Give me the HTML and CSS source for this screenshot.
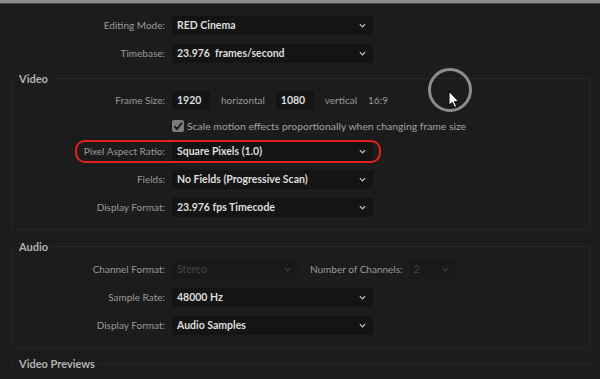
FILE: index.html
```html
<!DOCTYPE html>
<html lang="en">
<head>
  <meta charset="UTF-8">
  <title>Sequence Settings</title>
  <link rel="stylesheet" href="styles.css">
</head>
<body>
  <div class="topbar"></div>
  <div class="general">
    <div class="row">
      <div class="label">Editing Mode:</div>
      <div class="select"><span>RED Cinema</span><svg class="chev" viewBox="0 0 8 5"><path d="M1 1 L4 4 L7 1"/></svg></div>
    </div>
    <div class="row">
      <div class="label">Timebase:</div>
      <div class="select"><span>23.976&nbsp; frames/second</span><svg class="chev" viewBox="0 0 8 5"><path d="M1 1 L4 4 L7 1"/></svg></div>
    </div>
  </div>

  <fieldset class="group video">
    <legend>Video</legend>
    <div class="row first frame">
      <div class="label">Frame Size:</div>
      <div class="inline">
        <div class="num">1920</div>
        <span class="word">horizontal</span>
        <div class="num">1080</div>
        <span class="word">vertical</span>
        <span class="word">16:9</span>
      </div>
    </div>
    <div class="row scale">
      <div></div>
      <label class="check"><span class="box"><svg viewBox="0 0 10 10"><path d="M2 5.2 L4.2 7.5 L8.2 2.3"/></svg></span>Scale motion effects proportionally when changing frame size</label>
    </div>
    <div class="row par">
      <div class="label">Pixel Aspect Ratio:</div>
      <div class="select"><span>Square Pixels (1.0)</span><svg class="chev" viewBox="0 0 8 5"><path d="M1 1 L4 4 L7 1"/></svg></div>
      <div class="highlight"></div>
    </div>
    <div class="row">
      <div class="label">Fields:</div>
      <div class="select"><span>No Fields (Progressive Scan)</span><svg class="chev" viewBox="0 0 8 5"><path d="M1 1 L4 4 L7 1"/></svg></div>
    </div>
    <div class="row">
      <div class="label">Display Format:</div>
      <div class="select"><span>23.976 fps Timecode</span><svg class="chev" viewBox="0 0 8 5"><path d="M1 1 L4 4 L7 1"/></svg></div>
    </div>
  </fieldset>

  <fieldset class="group audio">
    <legend>Audio</legend>
    <div class="row first">
      <div class="label">Channel Format:</div>
      <div class="inline">
        <div class="select off wide"><span>Stereo</span><svg class="chev" viewBox="0 0 8 5"><path d="M1 1 L4 4 L7 1"/></svg></div>
        <span class="label channels">Number of Channels:</span>
        <div class="select off narrow"><span>2</span><svg class="chev" viewBox="0 0 8 5"><path d="M1 1 L4 4 L7 1"/></svg></div>
      </div>
    </div>
    <div class="row">
      <div class="label">Sample Rate:</div>
      <div class="select"><span>48000 Hz</span><svg class="chev" viewBox="0 0 8 5"><path d="M1 1 L4 4 L7 1"/></svg></div>
    </div>
    <div class="row">
      <div class="label">Display Format:</div>
      <div class="select"><span>Audio Samples</span><svg class="chev" viewBox="0 0 8 5"><path d="M1 1 L4 4 L7 1"/></svg></div>
    </div>
  </fieldset>

  <fieldset class="group previews">
    <legend>Video Previews</legend>
  </fieldset>

  <svg class="cursor" width="48" height="48" viewBox="0 0 48 48">
    <circle cx="24" cy="24" r="20.5" fill="none" stroke="#8c8c8c" stroke-width="3"/>
    <path d="M23 25 L23 39.5 L26.3 36.6 L28.7 41.6 L30.8 40.6 L28.5 35.7 L32.8 35.4 Z" fill="#fff" stroke="#111" stroke-width="1.1" stroke-linejoin="round"/>
  </svg>
</body>
</html>
```

FILE: styles.css
```css
body {
  margin: 0;
  background-color: #1c1c1c;
  color: #9a9a9a;
  font-family: Lato, "Open Sans", sans-serif;
  font-size: 10px;
  height: 379px;
  overflow: hidden;
  position: relative;
}
.topbar {
  height: 3px;
  background-color: #8e8e8e;
  border-bottom: 1px solid #4a4a4a;
}
.general {
  padding-top: 7px;
  border-bottom: 1px solid #222;
  width: 560px;
}
.row {
  display: grid;
  grid-template-columns: 165px 1fr;
  column-gap: 7px;
  align-items: center;
  height: 28px;
}
.group .row {
  grid-template-columns: 152px 1fr;
}
.row.frame,
.row.scale {
  height: 26px;
}
.row.par {
  height: 24px;
  margin-bottom: 2px;
}
.label {
  text-align: right;
  color: #9a9a9a;
}
.select {
  width: 201px;
  height: 19px;
  box-sizing: border-box;
  background-color: #141414;
  border-radius: 2px;
  display: flex;
  align-items: center;
  justify-content: space-between;
  padding: 0 7px 0 5px;
  color: #dedede;
  font-size: 10.5px;
  font-weight: 700;
}
.chev {
  width: 7px;
  height: 5px;
  fill: none;
  stroke: #c4c4c4;
  stroke-width: 1.4;
}
.select.off {
  background-color: #191919;
  color: #434343;
  font-weight: 400;
}
.select.off .chev {
  stroke: #3c3c3c;
}
.select.wide {
  width: 126px;
}
.select.narrow {
  width: 47px;
}
.inline {
  display: flex;
  align-items: center;
}
.num {
  width: 38px;
  height: 19px;
  box-sizing: border-box;
  background-color: #141414;
  border-radius: 2px;
  padding-left: 5px;
  line-height: 19px;
  color: #dedede;
  font-size: 10.5px;
  font-weight: 700;
}
.word {
  margin-left: 11px;
  color: #9a9a9a;
}
.word + .num {
  margin-left: 11px;
}
.channels {
  margin-left: 12px;
  margin-right: 6px;
}
.check {
  display: flex;
  align-items: center;
  color: #a2a2a2;
  font-size: 10.4px;
}
.box {
  width: 12px;
  height: 12px;
  background-color: #7a7a7a;
  border-radius: 2px;
  margin-right: 3px;
  display: flex;
}
.box svg {
  width: 12px;
  height: 12px;
  fill: none;
  stroke: #1c1c1c;
  stroke-width: 1.6;
}
.par {
  position: relative;
}
.highlight {
  position: absolute;
  left: 62px;
  top: 1px;
  width: 306px;
  height: 23px;
  box-sizing: border-box;
  border: 2px solid #e3201b;
  border-radius: 10px;
}
.group {
  margin: 4px 10px 0 12px;
  padding: 0;
  border: 1px solid #272727;
  border-radius: 2px;
}
.group legend {
  padding: 0 4px;
  margin-left: 2px;
  color: #b2b2b2;
  font-size: 11px;
  font-weight: 700;
}
.group .row.first {
  margin-top: 2px;
}
.video {
  padding-bottom: 8px;
}
.audio {
  margin-top: 10px;
  padding-bottom: 9px;
}
.previews {
  margin-top: 8px;
  height: 12px;
  border-bottom: none;
}
.cursor {
  position: absolute;
  left: 426px;
  top: 66px;
}
```
